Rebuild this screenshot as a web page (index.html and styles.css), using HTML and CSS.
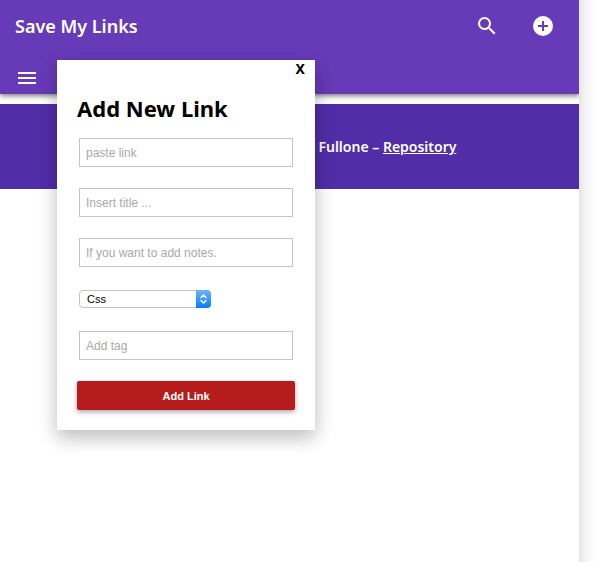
FILE: index.html
```html
<!DOCTYPE html>
<html lang="en">
<head>
<meta charset="utf-8">
<title>Save My Links</title>
<link rel="stylesheet" href="styles.css">
</head>
<body>
<div class="page">
  <header class="header">
    <div class="bar">
      <h1 class="brand">Save My Links</h1>
      <div class="actions">
        <button class="icon-button" type="button" aria-label="Search">
          <svg viewBox="0 0 24 24"><path d="M15.5 14h-.79l-.28-.27A6.47 6.47 0 0 0 16 9.500 6.500 6.500 0 1 0 9.500 16c1.610 0 3.090-.59 4.230-1.570l.27.28v.79l5 4.990L20.490 19l-4.990-5zm-6 0C7.010 14 5 11.990 5 9.500S7.010 5 9.500 5 14 7.010 14 9.500 11.990 14 9.500 14z"/></svg>
        </button>
        <button class="icon-button" type="button" aria-label="Add">
          <svg viewBox="0 0 24 24"><path d="M12 2a10 10 0 1 0 0 20 10 10 0 0 0 0-20zm5 11h-4v4h-2v-4H7v-2h4V7h2v4h4v2z"/></svg>
        </button>
      </div>
    </div>
    <button class="icon-button" type="button" aria-label="Menu">
      <svg viewBox="0 0 24 24"><path d="M3 18h18v-2H3v2zm0-5h18v-2H3v2zm0-7v2h18V6H3z"/></svg>
    </button>
  </header>
  <footer class="footer">
    <p class="credits">Fullone – <a href="#">Repository</a></p>
  </footer>
  <section class="modal" role="dialog" aria-labelledby="modal-title">
    <button class="close" type="button">X</button>
    <h2 class="modal-title" id="modal-title">Add New Link</h2>
    <form class="form">
      <input class="field" type="text" placeholder="paste link" aria-label="Link">
      <input class="field" type="text" placeholder="Insert title ..." aria-label="Title">
      <input class="field" type="text" placeholder="If you want to add notes." aria-label="Notes">
      <div class="picker">
        <select class="select" aria-label="Category"><option>Css</option></select>
        <svg class="stepper" viewBox="0 0 15 18"><path d="M5 7.500 7.500 5 10 7.500M5 10.500 7.500 13 10 10.500"/></svg>
      </div>
      <input class="field" type="text" placeholder="Add tag" aria-label="Tag">
      <button class="submit" type="submit">Add Link</button>
    </form>
  </section>
</div>
</body>
</html>
```
FILE: styles.css
```css
* {
  box-sizing: border-box;
}

body {
  margin: 0;
  background: #fff;
  font-family: "Noto Sans", "Open Sans", sans-serif;
}

button {
  padding: 0;
  border: 0;
  background: none;
  font: inherit;
}

.page {
  position: relative;
  min-height: 100vh;
  margin: 0 27px 0 0;
  background: #fff;
}

/* soft edge that falls to the right of the page */
.page::after {
  content: "";
  position: absolute;
  top: 0;
  bottom: 0;
  left: 100%;
  width: 18px;
  background: linear-gradient(to right, #e6e6e6, #f7f7f7 45%, #fff);
}

.header {
  height: 94px;
  padding: 0 24px 0 15px;
  background: #673ab7;
  box-shadow: 0 2px 5px rgba(0, 0, 0, 0.5);
  clip-path: inset(0 0 -10px 0);
}

.bar {
  display: flex;
  align-items: center;
  justify-content: space-between;
  height: 52px;
  margin-bottom: 14px;
}

.brand {
  margin: 0;
  color: #fff;
  font-size: 18px;
  font-weight: 600;
  line-height: 24px;
}

.actions {
  display: flex;
  gap: 32px;
}

.icon-button {
  display: block;
  width: 24px;
  height: 24px;
}

.icon-button svg {
  display: block;
  fill: #fff;
}

.footer {
  height: 85px;
  margin-top: 10px;
  padding-top: 31px;
  background: #512da8;
}

.credits {
  margin: 0 0 0 55%;
  color: #fff;
  font-size: 14px;
  font-weight: 600;
  line-height: 24px;
}

.credits a {
  color: inherit;
}

.modal {
  position: absolute;
  top: 60px;
  left: 57px;
  width: 258px;
  padding: 0 20px 20px;
  background: #fff;
  box-shadow: 0 8px 17px rgba(0, 0, 0, 0.16), 0 6px 20px rgba(0, 0, 0, 0.12);
}

.close {
  display: block;
  margin: 0 -10px 0 auto;
  color: #000;
  font-size: 14px;
  font-weight: 700;
  line-height: 18px;
}

.modal-title {
  margin: 15px 0;
  color: #000;
  font-size: 22px;
  font-weight: 700;
  line-height: 30px;
}

.form {
  display: grid;
  gap: 21px;
  font-family: "Liberation Sans", Arial, sans-serif;
  font-size: 12px;
}

.field {
  height: 29px;
  margin: 0 2px;
  padding: 0 6px;
  border: 1px solid #c4c4c4;
  background: #fff;
  font: inherit;
}

.field::placeholder {
  color: #a9a9a9;
}

.picker {
  position: relative;
  width: 132px;
  height: 22px;
  margin-left: 2px;
  padding-top: 2px;
}

.select {
  display: block;
  width: 100%;
  height: 18px;
  padding: 0 7px;
  appearance: none;
  border: 1px solid #c4c4c4;
  border-radius: 4px;
  background: #fff;
  color: #000;
  font-family: inherit;
  font-size: 11px;
}

.stepper {
  position: absolute;
  top: 2px;
  right: 0;
  width: 15px;
  height: 18px;
  border-radius: 0 4px 4px 0;
  background: linear-gradient(#6cb3fa, #087dfd);
  fill: none;
  stroke: #fff;
  stroke-width: 1.5;
  stroke-linecap: round;
  stroke-linejoin: round;
  pointer-events: none;
}

.submit {
  height: 29px;
  border-radius: 2px;
  background: #b71c1c;
  box-shadow: 0 2px 5px rgba(0, 0, 0, 0.35);
  color: #fff;
  font-size: 11px;
  font-weight: 700;
}
```
